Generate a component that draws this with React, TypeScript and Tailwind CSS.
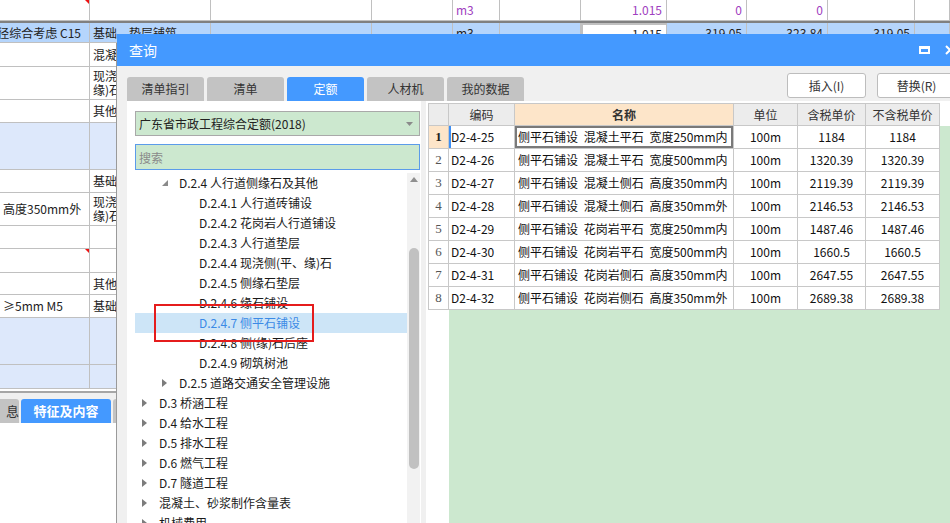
import React from 'react';

const topCols = ['w-[90px]', 'w-[121px]', 'w-[161px]', 'w-[81px]', 'w-[47px]', 'w-[81px]', 'w-[86px]', 'w-[80px]', 'w-[81px]', 'w-[87px]', 'w-[35px]'];

const row1 = ['', '', '', '', 'm3', '', '1.015', '0', '0', '', ''];
const row2 = ['径综合考虑 C15', '基础、垫层铺筑', '', '', 'm3', '', '1.015', '319.05', '323.84', '319.05', ''];

const sideRows = [
  { h: 'h-[24px]', bg: 'bg-white', a: '', b: ['混凝土垫层'] },
  { h: 'h-[33px]', bg: 'bg-white', a: '', b: ['现浇混凝土侧(平、', '缘)石'] },
  { h: 'h-[23px]', bg: 'bg-white', a: '', b: ['其他'] },
  { h: 'h-[47px]', bg: 'bg-[#dde8fb]', a: '', b: [] },
  { h: 'h-[23px]', bg: 'bg-white', a: '', b: ['基础'] },
  { h: 'h-[33px]', bg: 'bg-white', a: '高度350mm外', b: ['现浇混凝土侧(平、', '缘)石'] },
  { h: 'h-[23px]', bg: 'bg-white', a: '', b: [] },
  { h: 'h-[24px]', bg: 'bg-white', a: '', b: [], mark: true },
  { h: 'h-[22px]', bg: 'bg-white', a: '', b: ['其他'] },
  { h: 'h-[23px]', bg: 'bg-white', a: '≥5mm M5', b: ['基础'] },
  { h: 'h-[47px]', bg: 'bg-[#dde8fb]', a: '', b: [] },
  { h: 'h-[24px]', bg: 'bg-[#dde8fb]', a: '', b: [] },
];

const indent = ['pl-[7px]', 'pl-[27px]', 'pl-[47px]'];

type Node = { level: number; text: string; icon?: 'open' | 'closed'; selected?: boolean };

const tree: Node[] = [
  { level: 1, text: 'D.2.4 人行道侧缘石及其他', icon: 'open' },
  { level: 2, text: 'D.2.4.1 人行道砖铺设' },
  { level: 2, text: 'D.2.4.2 花岗岩人行道铺设' },
  { level: 2, text: 'D.2.4.3 人行道垫层' },
  { level: 2, text: 'D.2.4.4 现浇侧(平、缘)石' },
  { level: 2, text: 'D.2.4.5 侧缘石垫层' },
  { level: 2, text: 'D.2.4.6 缘石铺设' },
  { level: 2, text: 'D.2.4.7 侧平石铺设', selected: true },
  { level: 2, text: 'D.2.4.8 侧(缘)石后座' },
  { level: 2, text: 'D.2.4.9 砌筑树池' },
  { level: 1, text: 'D.2.5 道路交通安全管理设施', icon: 'closed' },
  { level: 0, text: 'D.3 桥涵工程', icon: 'closed' },
  { level: 0, text: 'D.4 给水工程', icon: 'closed' },
  { level: 0, text: 'D.5 排水工程', icon: 'closed' },
  { level: 0, text: 'D.6 燃气工程', icon: 'closed' },
  { level: 0, text: 'D.7 隧道工程', icon: 'closed' },
  { level: 0, text: '混凝土、砂浆制作含量表', icon: 'closed' },
  { level: 0, text: '机械费用', icon: 'closed' },
];

const rows = [
  ['D2-4-25', '侧平石铺设 混凝土平石 宽度250mm内', '100m', '1184', '1184'],
  ['D2-4-26', '侧平石铺设 混凝土平石 宽度500mm内', '100m', '1320.39', '1320.39'],
  ['D2-4-27', '侧平石铺设 混凝土侧石 高度350mm内', '100m', '2119.39', '2119.39'],
  ['D2-4-28', '侧平石铺设 混凝土侧石 高度350mm外', '100m', '2146.53', '2146.53'],
  ['D2-4-29', '侧平石铺设 花岗岩平石 宽度250mm内', '100m', '1487.46', '1487.46'],
  ['D2-4-30', '侧平石铺设 花岗岩平石 宽度500mm内', '100m', '1660.5', '1660.5'],
  ['D2-4-31', '侧平石铺设 花岗岩侧石 高度350mm内', '100m', '2647.55', '2647.55'],
  ['D2-4-32', '侧平石铺设 花岗岩侧石 高度350mm外', '100m', '2689.38', '2689.38'],
];

const RedMark = () => (
  <svg className="absolute right-0 top-0" width="4" height="4" viewBox="0 0 4 4">
    <polygon points="0,0 4,0 4,4" fill="#ee1111" />
  </svg>
);

const Arrow = ({ kind }: { kind?: 'open' | 'closed' }) => (
  <span className="flex w-[17px] shrink-0 items-center">
    {kind === 'open' && (
      <svg width="6" height="6" viewBox="0 0 6 6">
        <polygon points="6,0 6,6 0,6" fill="#8a8a8a" />
      </svg>
    )}
    {kind === 'closed' && (
      <svg width="5" height="8" viewBox="0 0 5 8">
        <polygon points="0,0 5,4 0,8" fill="#7c7c7c" />
      </svg>
    )}
  </span>
);

const Tab = ({ label, active }: { label: string; active?: boolean }) => (
  <div
    className={
      active
        ? 'flex h-[24px] w-[77px] items-center justify-center rounded-t-[3px] bg-[#4499ff] text-[12px] text-white'
        : 'flex h-[24px] w-[77px] items-center justify-center rounded-t-[3px] bg-[#c3c3c3] text-[12px] text-[#333]'
    }
  >
    {label}
  </div>
);

const App: React.FC = () => {
  return (
    <div className="relative h-[523px] w-[950px] overflow-hidden bg-white font-['Noto_Sans_CJK_SC',sans-serif] text-[12px] text-[#222]">
      {/* background sheet */}
      <div className="flex h-[21px] border-b border-[#c0c0c0]">
        {row1.map((t, i) => (
          <div
            key={i}
            className={`${topCols[i]} relative flex shrink-0 items-center border-r border-[#c0c0c0] text-[#a040c0] ${
              i >= 6 ? 'justify-end pr-[4px]' : 'pl-[3px]'
            }`}
          >
            {t}
            {i === 0 && <RedMark />}
          </div>
        ))}
      </div>
      <div className="h-[2px] bg-[#808080]" />
      <div className="flex h-[20px] bg-[#b5d5fc]">
        {row2.map((t, i) => (
          <div
            key={i}
            className={`${topCols[i]} flex shrink-0 items-center overflow-hidden whitespace-nowrap border-r border-b border-[#c0c0c0] ${
              i === 0 ? 'justify-end pr-[8px]' : i >= 6 ? 'justify-end pr-[4px]' : 'pl-[3px]'
            } ${i === 6 ? 'border-2 border-[#555] bg-white' : ''}`}
          >
            {t}
          </div>
        ))}
      </div>
      <div className="flex w-[117px] flex-col border-r border-[#9a9a9a]">
        {sideRows.map((r, i) => (
          <div key={i} className={`flex ${r.h} ${r.bg} shrink-0 border-b border-[#c0c0c0]`}>
            <div className="relative flex w-[90px] shrink-0 items-center overflow-hidden whitespace-nowrap border-r border-[#c0c0c0] pl-[3px]">
              {r.a}
              {r.mark && <RedMark />}
            </div>
            <div className="flex flex-1 flex-col justify-center overflow-hidden whitespace-nowrap pl-[3px] leading-[14px]">
              {r.b.map((l, j) => (
                <span key={j}>{l}</span>
              ))}
            </div>
          </div>
        ))}
        <div className="mt-[2px] h-[2px] bg-[#a6a6a6]" />
        <div className="flex h-[30px] items-end gap-[2px] bg-[#f0f0f0]">
          <div className="flex h-[24px] w-[19px] items-center justify-end rounded-tr-[3px] bg-[#c3c3c3] text-[13px] text-[#333]">息</div>
          <div className="flex h-[24px] w-[90px] items-center justify-center rounded-t-[3px] bg-[#4499ff] text-[13px] font-bold text-white">特征及内容</div>
          <div className="h-[24px] flex-1 rounded-tl-[3px] bg-[#c3c3c3]" />
        </div>
        <div className="h-[120px] bg-white" />
      </div>

      {/* query dialog */}
      <div className="absolute left-[117px] top-[34px] flex h-[520px] w-[870px] flex-col bg-[#f0f0f0]">
        <div className="flex h-[32px] shrink-0 items-center bg-[#4499ff] pl-[12px] pr-[32px] text-[14px] text-white">
          <span>查询</span>
          <div className="flex-1" />
          <div className="h-[8px] w-[11px] border-2 border-t-[3px] border-white" />
          <svg className="ml-[15px]" width="10" height="10" viewBox="0 0 10 10">
            <path d="M1 1 L9 9 M9 1 L1 9" stroke="#fff" strokeWidth="2" />
          </svg>
        </div>

        <div className="flex h-[35px] shrink-0 items-end pl-[10px] pr-[31px]">
          <div className="flex gap-[3px]">
            <Tab label="清单指引" />
            <Tab label="清单" />
            <Tab label="定额" active />
            <Tab label="人材机" />
            <Tab label="我的数据" />
          </div>
          <div className="flex-1" />
          <div className="mb-[3px] flex gap-[11px] self-end">
            <div className="flex h-[25px] w-[79px] items-center justify-center rounded-[3px] border border-[#bdbdbd] bg-white text-[12px] text-[#333]">插入(I)</div>
            <div className="flex h-[25px] w-[79px] items-center justify-center rounded-[3px] border border-[#bdbdbd] bg-white text-[12px] text-[#333]">替换(R)</div>
          </div>
        </div>

        <div className="flex min-h-0 flex-1">
          {/* left tree panel */}
          <div className="ml-[10px] flex w-[294px] shrink-0 flex-col bg-white pl-[8px] pr-[1px] pt-[10px]">
            <div className="flex h-[25px] shrink-0 items-center border border-[#a9a9a9] bg-[#cce8cf] pl-[3px] pr-[6px] text-[12px] text-[#222]">
              <span className="flex-1">广东省市政工程综合定额(2018)</span>
              <svg width="7" height="4" viewBox="0 0 7 4">
                <polygon points="0,0 7,0 3.5,4" fill="#8a8a8a" />
              </svg>
            </div>
            <input
              readOnly
              placeholder="搜索"
              className="mt-[8px] h-[26px] shrink-0 border border-[#5b9bea] bg-[#cce8cf] pl-[3px] text-[12px] outline-none placeholder:text-[#8a8a8a]"
            />
            <div className="mt-[3px] flex min-h-0 flex-1">
              <div className="relative min-w-0 flex-1 overflow-hidden">
                {tree.map((n, i) => (
                  <div
                    key={i}
                    className={`flex h-[20px] items-center whitespace-nowrap ${indent[n.level]} ${
                      n.selected ? 'bg-[#cde5f7] text-[#3b8ae6]' : 'text-[#1a1a1a]'
                    }`}
                  >
                    <Arrow kind={n.icon} />
                    <span>{n.text}</span>
                  </div>
                ))}
                <div className="absolute left-[19px] top-[131px] h-[38px] w-[160px] border-2 border-[#e51c1c]" />
              </div>
              <div className="flex w-[13px] shrink-0 flex-col items-center bg-[#f2f2f2]">
                <svg className="mt-[4px]" width="8" height="5" viewBox="0 0 8 5">
                  <polygon points="0,5 8,5 4,0" fill="#8f8f8f" />
                </svg>
                <div className="mt-[66px] h-[221px] w-[10px] rounded-full bg-[#c1c1c1]" />
              </div>
            </div>
          </div>

          {/* right grid panel */}
          <div className="ml-[5px] flex min-w-0 flex-1 flex-col bg-white pl-[2px] pt-[2px]">
            <div className="flex h-[23px] shrink-0 text-[12px] text-[#333]">
              <div className="w-[21px] border border-[#c8c8c8] bg-[#ececec]" />
              <div className="flex w-[66px] items-center justify-center border-y border-r border-[#c8c8c8] bg-[#ececec]">编码</div>
              <div className="flex w-[219px] items-center justify-center border-y border-r border-[#c8c8c8] bg-[#fde5c9] font-bold">名称</div>
              <div className="flex w-[64px] items-center justify-center border-y border-r border-[#c8c8c8] bg-[#ececec]">单位</div>
              <div className="flex w-[68px] items-center justify-center border-y border-r border-[#c8c8c8] bg-[#ececec]">含税单价</div>
              <div className="flex w-[74px] items-center justify-center border-y border-r border-[#c8c8c8] bg-[#ececec]">不含税单价</div>
            </div>
            <div className="flex min-h-0 flex-1">
              <div className="flex w-[21px] shrink-0 flex-col bg-white">
                {rows.map((_, i) => (
                  <div
                    key={i}
                    className={`flex h-[23px] shrink-0 items-center justify-center border-x border-b border-[#c8c8c8] font-['Liberation_Serif',serif] text-[13px] ${
                      i === 0 ? 'bg-[#fde5c9] font-bold text-[#222]' : 'text-[#555]'
                    }`}
                  >
                    {i + 1}
                  </div>
                ))}
              </div>
              <div className="min-w-0 flex-1 bg-[#cce8cf]">
                {rows.map((r, i) => (
                  <div key={i} className="flex h-[23px] text-[12px] text-[#111]">
                    <div
                      className={`flex w-[66px] items-center border-b border-r border-[#c8c8c8] bg-white pl-[2px] ${
                        i === 0 ? 'shadow-[inset_2px_0_0_#3d8ff5]' : ''
                      }`}
                    >
                      {r[0]}
                    </div>
                    <div
                      className={`flex w-[219px] items-center whitespace-nowrap border-b border-r border-[#c8c8c8] bg-white pl-[3px] [word-spacing:3px] ${
                        i === 0 ? 'ring-2 ring-inset ring-[#7a7a7a]' : ''
                      }`}
                    >
                      {r[1]}
                    </div>
                    <div className="flex w-[64px] items-center justify-center border-b border-r border-[#c8c8c8] bg-white">{r[2]}</div>
                    <div className="flex w-[68px] items-center justify-center border-b border-r border-[#c8c8c8] bg-white">{r[3]}</div>
                    <div className="flex w-[74px] items-center justify-center border-b border-r border-[#c8c8c8] bg-white">{r[4]}</div>
                  </div>
                ))}
              </div>
            </div>
          </div>
        </div>
      </div>
    </div>
  );
};

export default App;
